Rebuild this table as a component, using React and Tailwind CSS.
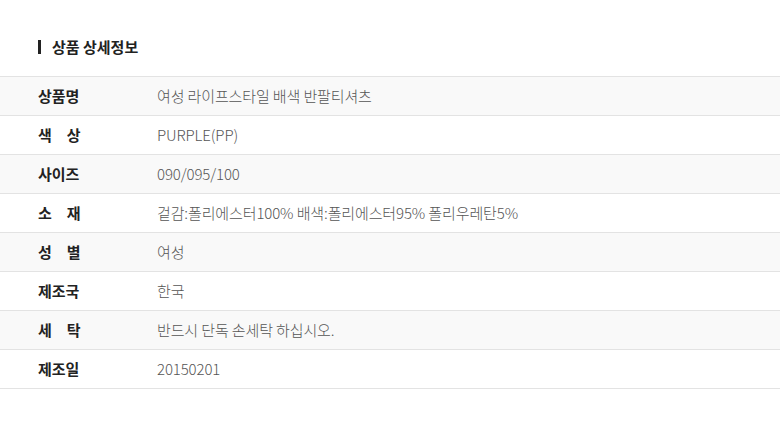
const rows = [
  ['상품명', '여성 라이프스타일 배색 반팔티셔츠'],
  ['색　상', 'PURPLE(PP)'],
  ['사이즈', '090/095/100'],
  ['소　재', '겉감:폴리에스터100% 배색:폴리에스터95% 폴리우레탄5%'],
  ['성　별', '여성'],
  ['제조국', '한국'],
  ['세　탁', '반드시 단독 손세탁 하십시오.'],
  ['제조일', '20150201'],
]

export default function App() {
  return (
    <div
      className="w-[780px] h-[427px] bg-white pt-[37px]"
      style={{ fontFamily: '"Noto Sans CJK KR", "Noto Sans", sans-serif' }}
    >
      <h2 className="flex items-center gap-[11px] pl-[38px] h-[20px] text-[15px] font-bold text-[#222]">
        <span className="w-[3px] h-[14px] bg-[#222]" />
        상품 상세정보
      </h2>
      <div className="mt-[19px] border-t border-[#e3e3e3]">
        {rows.map(([label, value], i) => (
          <div
            key={i}
            className={`flex items-center h-[39px] border-b border-[#e3e3e3] text-[15px] ${i % 2 === 0 ? 'bg-[#f9f9f9]' : 'bg-white'}`}
          >
            <div className="w-[157px] pl-[38px] font-bold text-[#222]">{label}</div>
            <div className="text-[#555] font-light tracking-[-0.12px]">{value}</div>
          </div>
        ))}
      </div>
    </div>
  )
}
